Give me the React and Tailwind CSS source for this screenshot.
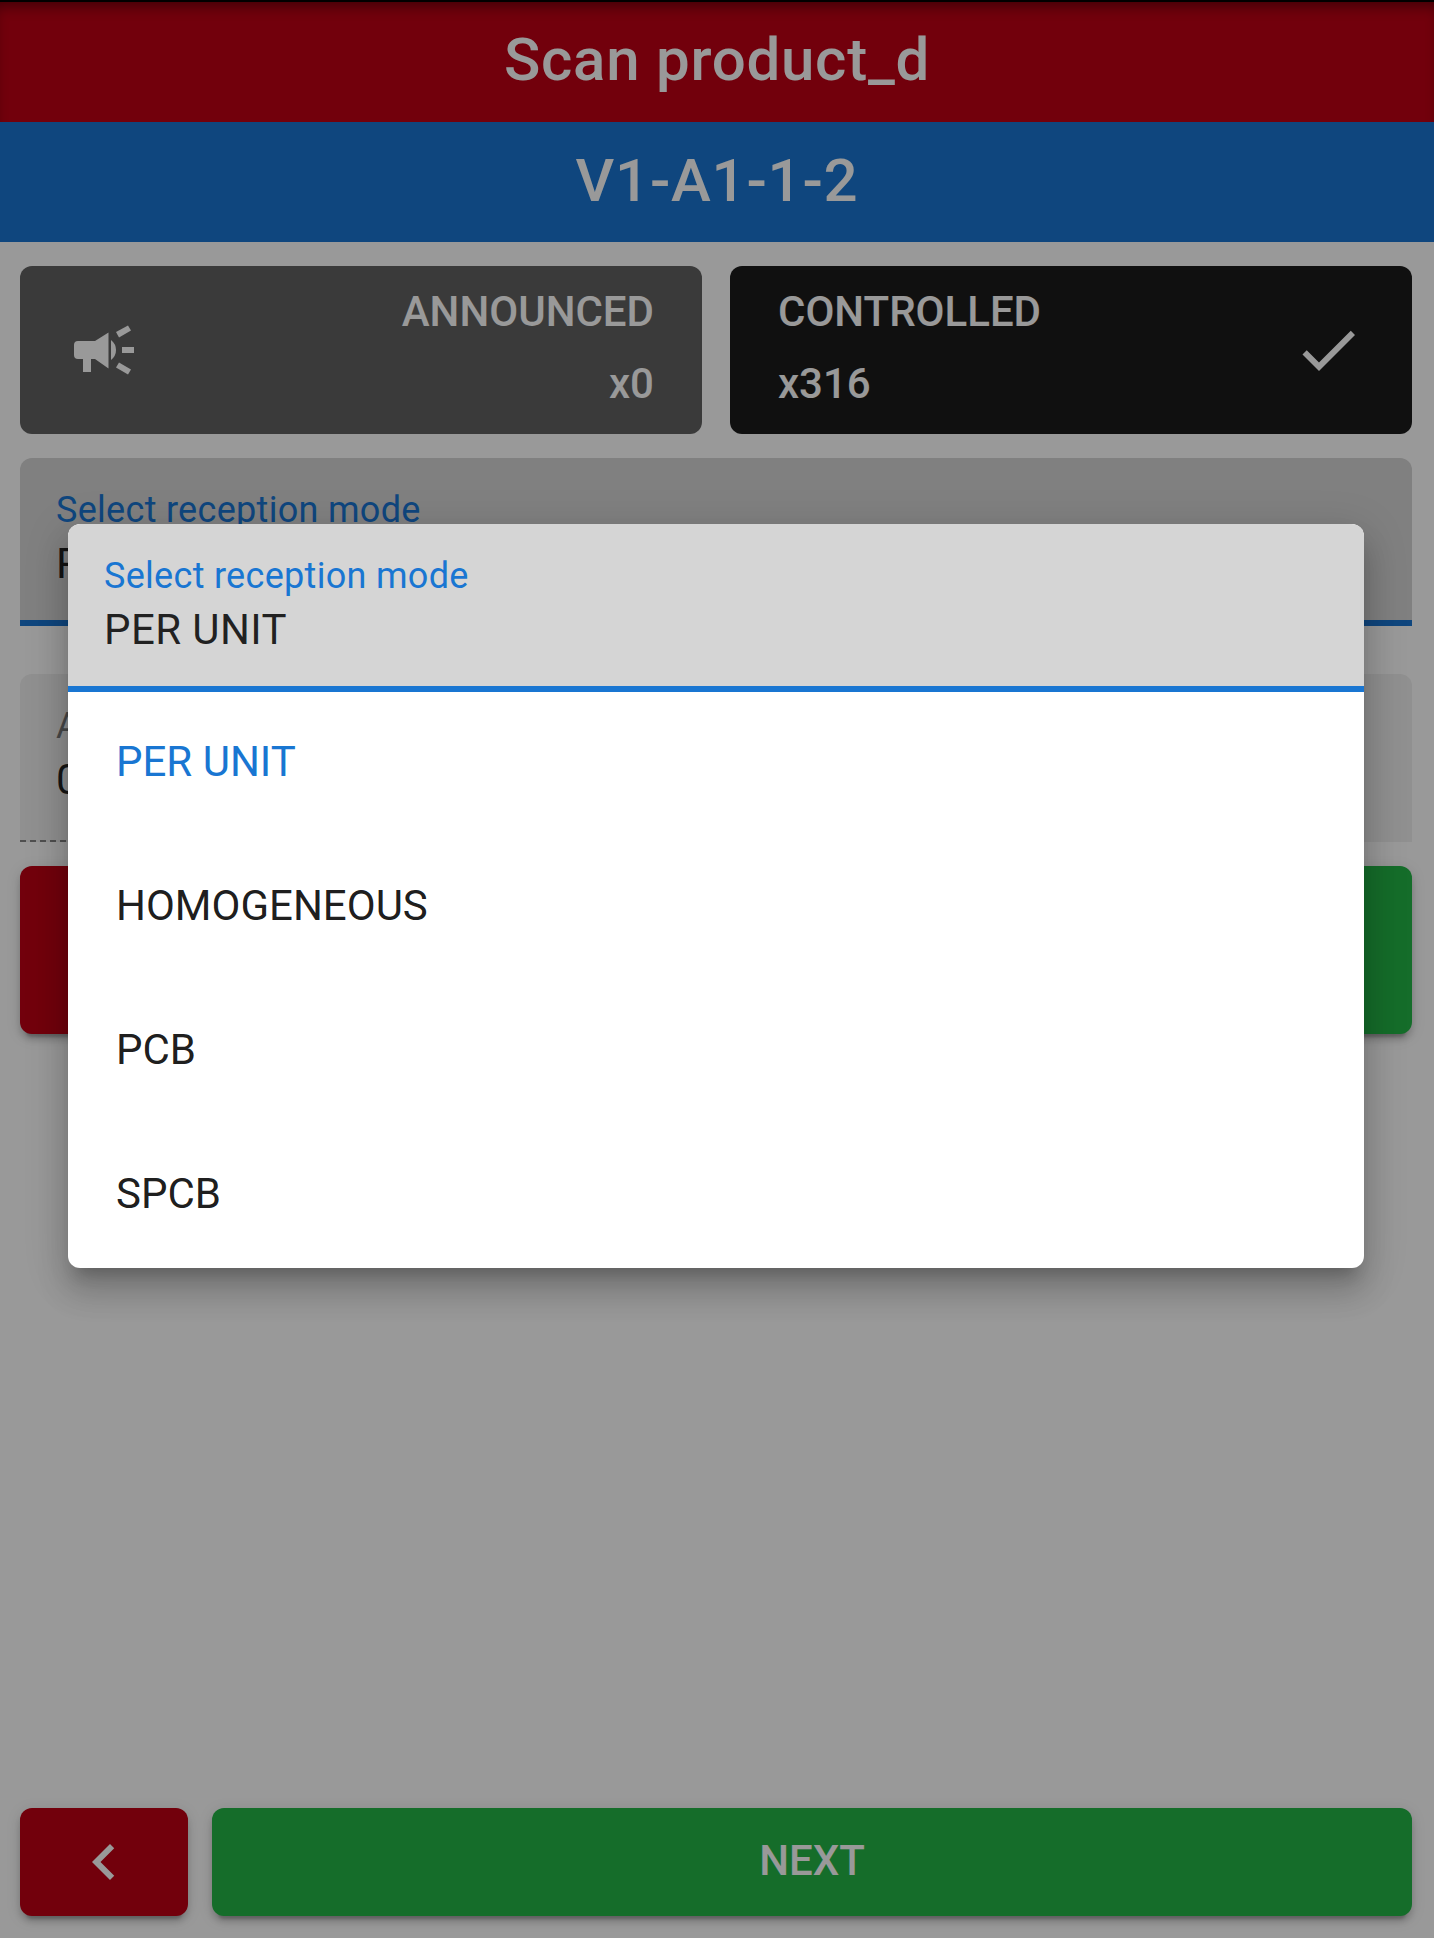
import React from 'react';

const raised = 'shadow-[0_9px_3px_-6px_rgba(0,0,0,0.2),0_6px_6px_rgba(0,0,0,0.14),0_3px_15px_rgba(0,0,0,0.12)]';

function Field({ label, value }) {
  return (
    <div className="h-[168px] rounded-t-[12px] px-9 pt-[34px] bg-[#d5d5d5] border-b-[6px] border-[#1976d2]">
      <div className="text-[36px] leading-[36px] tracking-[0.3px] text-[#1976d2]">{label}</div>
      <div className="mt-[12px] text-[42px] leading-[48px] tracking-[0.4px] text-black/85">{value}</div>
    </div>
  );
}

export default function App() {
  const modes = ['PER UNIT', 'HOMOGENEOUS', 'PCB', 'SPCB'];

  return (
    <div className="relative w-[1434px] h-[1938px] overflow-hidden bg-white flex flex-col font-['Roboto',sans-serif]">
      {/* Header bars */}
      <div className="h-[122px] shrink-0 flex items-center justify-center pb-[2px] bg-[#be0014] text-white text-[60px] font-medium tracking-[0.75px] shadow-[inset_0_2px_0_#000,inset_0_12px_14px_-6px_rgba(0,0,0,0.45)]">
        Scan product_d
      </div>
      <div className="h-[120px] shrink-0 flex items-center justify-center pb-[2px] bg-[#1976d2] text-white text-[60px] font-medium tracking-[0.75px]">
        V1-A1-1-2
      </div>

      <div className="flex-1 flex flex-col gap-6 pl-5 pr-[22px] pt-6 pb-[22px]">
        {/* Counters */}
        <div className="grid grid-cols-2 gap-7">
          <div className="h-[168px] rounded-[12px] bg-[#616161] text-white flex items-center justify-between px-12">
            <svg viewBox="0 0 72 72" className="w-[72px] h-[72px] fill-white">
              <path d="M10 27 L27 27 L40.5 18.5 L40.5 54.5 L27 45 L23 45 L23 58 L15 58 L15 45 L10 45 Q6 45 6 41 L6 31 Q6 27 10 27 Z" />
              <path d="M43 26 Q48 30 48 36 Q48 42 43 46 Z" />
              <path d="M54 33 H66 V39 H54 Z" />
              <path d="M48 18 L60 11.5 L63 16.5 L51 23.5 Z" />
              <path d="M51 48.5 L63 55.5 L60 60.5 L48 53.5 Z" />
            </svg>
            <div className="text-right text-[42px] leading-[72px] font-medium pb-[4px]">
              <div>ANNOUNCED</div>
              <div>x0</div>
            </div>
          </div>
          <div className="h-[168px] rounded-[12px] bg-[#1c1c1c] text-white flex items-center justify-between px-12">
            <div className="text-[42px] leading-[72px] font-medium pb-[4px]">
              <div>CONTROLLED</div>
              <div>x316</div>
            </div>
            <svg viewBox="0 0 24 24" className="w-[72px] h-[72px] fill-white">
              <path d="M21,7L9,19L3.5,13.5L4.91,12.09L9,16.17L19.59,5.59L21,7Z" />
            </svg>
          </div>
        </div>

        <Field label="Select reception mode" value="PER UNIT" />

        {/* Disabled field, its dashed line only shows left of the menu */}
        <div className="mt-6">
          <div className="h-[168px] rounded-t-[12px] px-9 pt-[34px] bg-[#f0f0f0]">
            <div className="text-[36px] leading-[36px] tracking-[0.3px] text-black/50">Available</div>
            <div className="mt-[12px] text-[42px] leading-[48px] tracking-[0.4px] text-black/85">0</div>
          </div>
          <div className="w-[48px] h-[2px] -mt-[2px] bg-[repeating-linear-gradient(90deg,rgba(0,0,0,0.45)_0,rgba(0,0,0,0.45)_6px,transparent_6px,transparent_10px)]" />
        </div>

        {/* Action buttons, mostly behind the menu */}
        <div className="grid grid-cols-2 gap-7">
          <div className={`h-[168px] rounded-[12px] bg-[#be0014] ${raised}`} />
          <div className={`h-[168px] rounded-[12px] bg-[#23b646] ${raised}`} />
        </div>

        {/* Footer */}
        <div className="mt-auto flex gap-6">
          <button className={`w-[168px] h-[108px] rounded-[12px] bg-[#be0014] flex items-center justify-center ${raised}`}>
            <svg viewBox="0 0 24 24" className="w-[72px] h-[72px] fill-white">
              <path d="M15.41,16.58L10.83,12L15.41,7.41L14,6L8,12L14,18L15.41,16.58Z" />
            </svg>
          </button>
          <button className={`flex-1 h-[108px] rounded-[12px] bg-[#23b646] text-white text-[42px] font-medium pb-[4px] ${raised}`}>
            NEXT
          </button>
        </div>
      </div>

      {/* Scrim */}
      <div className="absolute inset-0 bg-black/40" />

      {/* Select menu */}
      <div className="absolute left-[68px] top-[524px] w-[1296px] rounded-[12px] overflow-hidden bg-white shadow-[0_15px_15px_-9px_rgba(0,0,0,0.2),0_24px_30px_3px_rgba(0,0,0,0.14),0_9px_42px_6px_rgba(0,0,0,0.12)]">
        <Field label="Select reception mode" value="PER UNIT" />
        {modes.map((m, i) => (
          <div key={m} className={`h-[144px] flex items-center px-12 pb-[6px] text-[42px] ${i === 0 ? 'text-[#1976d2]' : 'text-black/90'}`}>
            {m}
          </div>
        ))}
      </div>
    </div>
  );
}
